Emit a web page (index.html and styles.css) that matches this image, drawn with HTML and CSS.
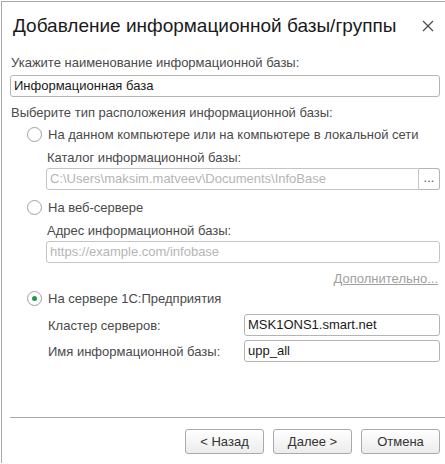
FILE: index.html
```html
<!DOCTYPE html>
<html lang="ru">
<head>
  <meta charset="UTF-8">
  <title>Добавление информационной базы/группы</title>
  <link rel="stylesheet" href="styles.css">
</head>
<body>
  <div class="window">
    <div class="title-bar">
      <span class="title">Добавление информационной базы/группы</span>
      <svg class="close" width="12" height="12" viewBox="0 0 12 12">
        <line x1="1" y1="1" x2="11" y2="11" stroke="#4d4d4d" stroke-width="1.2"/>
        <line x1="11" y1="1" x2="1" y2="11" stroke="#4d4d4d" stroke-width="1.2"/>
      </svg>
    </div>
    <div class="content">
      <div class="label">Укажите наименование информационной базы:</div>
      <div class="field">Информационная база</div>

      <div class="label section-label">Выберите тип расположения информационной базы:</div>

      <div class="option">
        <div class="radio-row"><span class="radio"></span>На данном компьютере или на компьютере в локальной сети</div>
        <div class="sub">
          <div class="label">Каталог информационной базы:</div>
          <div class="field-group">
            <div class="field disabled">C:\Users\maksim.matveev\Documents\InfoBase</div>
            <div class="pick">...</div>
          </div>
        </div>
      </div>

      <div class="option">
        <div class="radio-row"><span class="radio"></span>На веб-сервере</div>
        <div class="sub">
          <div class="label">Адрес информационной базы:</div>
          <div class="field disabled">https://example.com/infobase</div>
          <div class="more"><span>Дополнительно...</span></div>
        </div>
      </div>

      <div class="option">
        <div class="radio-row"><span class="radio checked"></span>На сервере 1С:Предприятия</div>
        <div class="sub">
          <div class="pair">
            <span class="pair-label">Кластер серверов:</span>
            <div class="field">MSK1ONS1.smart.net</div>
          </div>
          <div class="pair">
            <span class="pair-label">Имя информационной базы:</span>
            <div class="field">upp_all</div>
          </div>
        </div>
      </div>

      <div class="footer">
        <button class="btn">&lt; Назад</button>
        <button class="btn">Далее &gt;</button>
        <button class="btn">Отмена</button>
      </div>
    </div>
  </div>
</body>
</html>
```

FILE: styles.css
```css
body {
  margin: 0;
  background: #fff;
  font-family: "Liberation Sans", Arial, sans-serif;
  font-size: 13px;
  color: #4a4a4a;
}
.window {
  margin: 1px 0 0 1px;
  border-top: 1px solid #a8a8a8;
  border-left: 1px solid #a8a8a8;
  height: 462px;
  box-sizing: border-box;
}
.title-bar {
  display: flex;
  align-items: center;
  height: 40px;
  padding: 4px 0 0 11px;
}
.title {
  font-size: 19px;
  color: #1a1a1a;
  white-space: nowrap;
}
.close {
  display: block;
  flex: 0 0 12px;
  margin-left: auto;
  margin-right: 11px;
}
.content {
  padding: 9px 5px 0 8px;
}
.label {
  line-height: 15px;
  margin-bottom: 5px;
  padding-left: 1px;
}
.field {
  height: 22px;
  box-sizing: border-box;
  border: 1px solid #b4b4b4;
  border-radius: 3px;
  padding: 0 3px;
  line-height: 20px;
  color: #1a1a1a;
  background: #fff;
}
.field.disabled {
  color: #b5b5b5;
  border-color: #c4c4c4;
}
.section-label {
  margin-top: 8px;
}
.option {
  padding-left: 17px;
}
.option + .option {
  margin-top: 8px;
}
.radio-row {
  display: flex;
  align-items: center;
  gap: 6px;
  height: 18px;
  margin-top: 1px;
}
.radio {
  width: 13px;
  height: 13px;
  border: 1px solid #a0a0a0;
  border-radius: 50%;
  display: flex;
  align-items: center;
  justify-content: center;
}
.radio.checked::after {
  content: "";
  width: 5px;
  height: 5px;
  border-radius: 50%;
  background: #1e9a4b;
}
.sub {
  padding-left: 19px;
  padding-top: 7px;
}
.sub .label {
  margin-bottom: 3px;
}
.field-group {
  display: flex;
}
.field-group .field {
  flex: 1;
  border-radius: 3px 0 0 3px;
}
.pick {
  width: 21px;
  height: 22px;
  box-sizing: border-box;
  border: 1px solid #b4b4b4;
  border-left: none;
  border-radius: 0 3px 3px 0;
  text-align: center;
  line-height: 18px;
  color: #555;
}
.more {
  text-align: right;
  margin: 8px 2px -5px 0;
  color: #a0a0a0;
  line-height: 15px;
}
.more span {
  text-decoration: underline;
}
.pair {
  display: flex;
  align-items: center;
  margin-bottom: 4px;
}
.pair-label {
  width: 196px;
  padding-left: 2px;
}
.pair .field {
  flex: 1;
}
.footer {
  margin-top: 55px;
  border-top: 1px solid #a8a8a8;
  margin-right: -5px;
  padding: 11px 5px 0 0;
  display: flex;
  justify-content: flex-end;
  gap: 9px;
}
.btn {
  width: 79px;
  height: 25px;
  font-family: inherit;
  font-size: 13px;
  color: #333;
  border: 1px solid #aaa;
  border-radius: 3px;
  background: linear-gradient(#fff, #ececec);
}
```
